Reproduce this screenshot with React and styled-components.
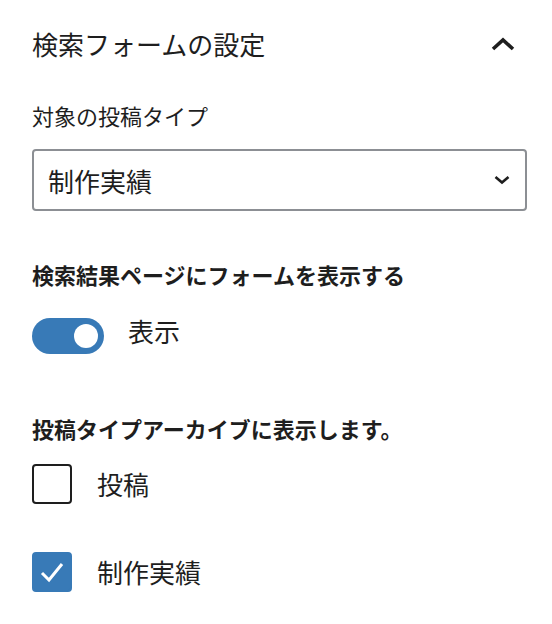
import styled, { createGlobalStyle } from "styled-components";
import { useState } from "react";

const GlobalStyle = createGlobalStyle`
  html, body {
    margin: 0;
    padding: 0;
    background: #fff;
  }
  body {
    font-family: "Noto Sans CJK JP", "Noto Sans", sans-serif;
    color: #1e1e1e;
  }
`

const Panel = styled.div`
  width: 552px;
  box-sizing: border-box;
  padding: 24px 25px 32px 32px;
  display: flex;
  flex-direction: column;
`
const Header = styled.div`
  display: flex;
  align-items: center;
  justify-content: space-between;
  height: 40px;
`
const PanelTitle = styled.h2`
  margin: 0;
  font-size: 26px;
  font-weight: 400;
  line-height: 40px;
`
const IconButton = styled.button`
  border: none;
  background: none;
  padding: 0;
  margin-right: 12px;
  width: 24px;
  height: 24px;
  display: flex;
  align-items: center;
  justify-content: center;
  color: #1e1e1e;
  cursor: pointer;
`
const Label = styled.div`
  font-size: 22px;
  line-height: 32px;
  font-weight: ${p => (p.$bold ? 700 : 400)};
  margin-top: ${p => p.$top}px;
`
const SelectBox = styled.div`
  margin-top: 18px;
  height: 62px;
  box-sizing: border-box;
  border: 2px solid #8c8f94;
  border-radius: 4px;
  display: flex;
  align-items: center;
  justify-content: space-between;
  padding: 0 15px 0 14px;
  font-size: 26px;
`
const ToggleRow = styled.label`
  margin-top: 28px;
  display: flex;
  align-items: flex-start;
  gap: 24px;
  cursor: pointer;
`
const Track = styled.span`
  width: 72px;
  height: 36px;
  border-radius: 18px;
  background: ${p => (p.$on ? "#387ab7" : "#fff")};
  border: ${p => (p.$on ? "none" : "2px solid #1e1e1e")};
  box-sizing: border-box;
  display: flex;
  align-items: center;
  justify-content: ${p => (p.$on ? "flex-end" : "flex-start")};
  padding: 0 6px;
`
const Thumb = styled.span`
  width: 24px;
  height: 24px;
  border-radius: 50%;
  background: ${p => (p.$on ? "#fff" : "#1e1e1e")};
`
const OptionText = styled.span`
  font-size: 26px;
  line-height: 26px;
`
const CheckRow = styled.label`
  margin-top: ${p => p.$top}px;
  display: flex;
  align-items: center;
  gap: 25px;
  cursor: pointer;
`
const Box = styled.span`
  width: 40px;
  height: 40px;
  box-sizing: border-box;
  border-radius: 4px;
  border: 2px solid ${p => (p.$checked ? "#387ab7" : "#1e1e1e")};
  background: ${p => (p.$checked ? "#387ab7" : "#fff")};
  display: flex;
  align-items: center;
  justify-content: center;
`

export default function App() {
  const [show, setShow] = useState(true)
  const [types, setTypes] = useState({ post: false, works: true })

  const toggleType = key => setTypes({ ...types, [key]: !types[key] })

  return (
    <>
      <GlobalStyle />
      <Panel>
        <Header>
          <PanelTitle>検索フォームの設定</PanelTitle>
          <IconButton aria-label="閉じる">
            <svg width="24" height="14" viewBox="0 0 24 14">
              <path d="M2 12 L12 3 L22 12" fill="none" stroke="currentColor" strokeWidth="3.6" />
            </svg>
          </IconButton>
        </Header>

        <Label $top={35}>対象の投稿タイプ</Label>
        <SelectBox>
          <span>制作実績</span>
          <svg width="16" height="10" viewBox="0 0 16 10">
            <path d="M1.5 2 L8 7.5 L14.5 2" fill="none" stroke="#1e1e1e" strokeWidth="2.6" />
          </svg>
        </SelectBox>

        <Label $bold $top={47}>検索結果ページにフォームを表示する</Label>
        <ToggleRow onClick={() => setShow(!show)}>
          <Track $on={show}>
            <Thumb $on={show} />
          </Track>
          <OptionText>表示</OptionText>
        </ToggleRow>

        <Label $bold $top={58}>投稿タイプアーカイブに表示します。</Label>
        <CheckRow $top={20} onClick={() => toggleType("post")}>
          <Box $checked={types.post}>
            {types.post && (
              <svg width="28" height="28" viewBox="0 0 28 28">
                <path d="M4 15 L11 22 L24 6" fill="none" stroke="#fff" strokeWidth="3" />
              </svg>
            )}
          </Box>
          <OptionText>投稿</OptionText>
        </CheckRow>
        <CheckRow $top={48} onClick={() => toggleType("works")}>
          <Box $checked={types.works}>
            {types.works && (
              <svg width="28" height="28" viewBox="0 0 28 28">
                <path d="M4 15 L11 22 L24 6" fill="none" stroke="#fff" strokeWidth="3" />
              </svg>
            )}
          </Box>
          <OptionText>制作実績</OptionText>
        </CheckRow>
      </Panel>
    </>
  )
}
